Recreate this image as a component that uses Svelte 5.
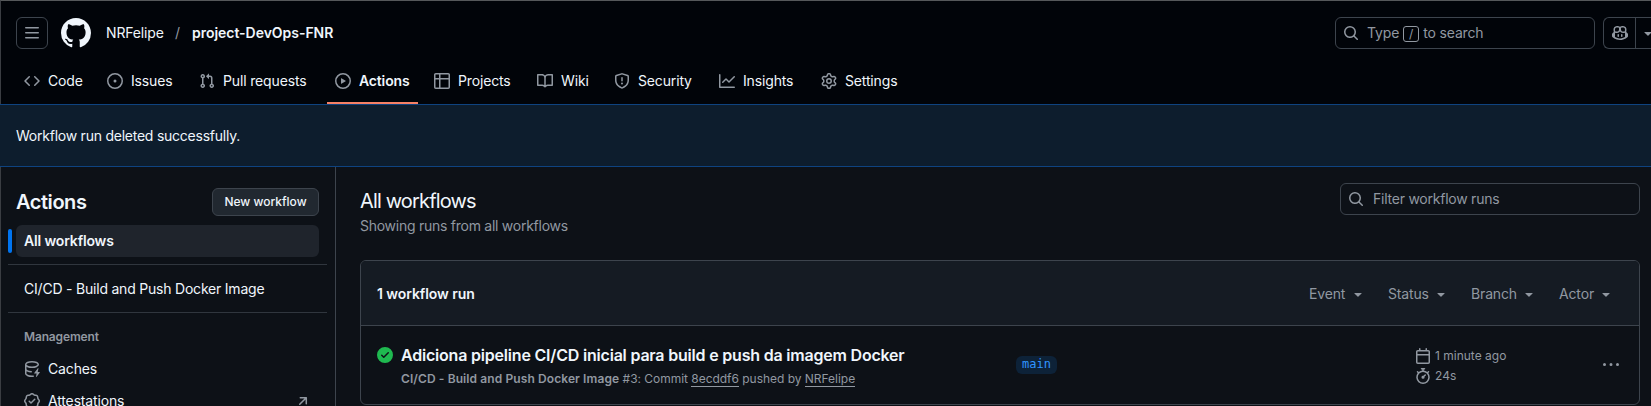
<script>
  const icons = {
    menu: ['M1 2.75A.75.75 0 0 1 1.75 2h12.5a.75.75 0 0 1 0 1.5H1.75A.75.75 0 0 1 1 2.75Zm0 5A.75.75 0 0 1 1.75 7h12.5a.75.75 0 0 1 0 1.5H1.75A.75.75 0 0 1 1 7.75ZM1.75 12h12.5a.75.75 0 0 1 0 1.5H1.75a.75.75 0 0 1 0-1.5Z'],
    mark: ['M8 0c4.42 0 8 3.58 8 8a8.013 8.013 0 0 1-5.45 7.59c-.4.08-.55-.17-.55-.38 0-.27.01-1.13.01-2.2 0-.75-.25-1.23-.54-1.48 1.78-.2 3.65-.88 3.65-3.95 0-.88-.31-1.59-.82-2.15.08-.2.36-1.02-.08-2.12 0 0-.67-.22-2.2.82-.64-.18-1.32-.27-2-.27-.68 0-1.36.09-2 .27-1.53-1.03-2.2-.82-2.2-.82-.44 1.1-.16 1.92-.08 2.12-.51.56-.82 1.28-.82 2.15 0 3.06 1.86 3.75 3.64 3.95-.23.2-.44.55-.51 1.07-.46.21-1.61.55-2.33-.66-.15-.24-.6-.83-1.23-.82-.67.01-.27.38.01.53.34.19.73.9.82 1.13.16.45.68 1.31 2.69.94 0 .67.01 1.3.01 1.49 0 .21-.15.45-.55.38A7.995 7.995 0 0 1 0 8c0-4.42 3.58-8 8-8Z'],
    search: ['M10.68 11.74a6 6 0 0 1-7.922-8.982 6 6 0 0 1 8.982 7.922l3.04 3.04a.749.749 0 0 1-.326 1.275.749.749 0 0 1-.734-.215ZM11.5 7a4.499 4.499 0 1 0-8.997 0A4.499 4.499 0 0 0 11.5 7Z'],
    code: ['m11.28 3.22 4.25 4.25a.75.75 0 0 1 0 1.06l-4.25 4.25a.749.749 0 0 1-1.275-.326.749.749 0 0 1 .215-.734L13.94 8l-3.72-3.72a.749.749 0 0 1 .326-1.275.749.749 0 0 1 .734.215Zm-6.56 0a.751.751 0 0 1 1.042.018.751.751 0 0 1 .018 1.042L2.06 8l3.72 3.72a.749.749 0 0 1-.326 1.275.749.749 0 0 1-.734-.215L.47 8.53a.75.75 0 0 1 0-1.06Z'],
    issue: ['M8 9.5a1.5 1.5 0 1 0 0-3 1.5 1.5 0 0 0 0 3Z', 'M8 0a8 8 0 1 1 0 16A8 8 0 0 1 8 0ZM1.5 8a6.5 6.5 0 1 0 13 0 6.5 6.5 0 0 0-13 0Z'],
    pull: ['M1.5 3.25a2.25 2.25 0 1 1 3 2.122v5.256a2.251 2.251 0 1 1-1.5 0V5.372A2.25 2.25 0 0 1 1.5 3.25Zm5.677-.177L9.573.677A.25.25 0 0 1 10 .854V2.5h1A2.5 2.5 0 0 1 13.5 5v5.628a2.251 2.251 0 1 1-1.5 0V5a1 1 0 0 0-1-1h-1v1.646a.25.25 0 0 1-.427.177L7.177 3.427a.25.25 0 0 1 0-.354ZM3.75 2.5a.75.75 0 1 0 0 1.5.75.75 0 0 0 0-1.5Zm0 9.5a.75.75 0 1 0 0 1.5.75.75 0 0 0 0-1.5Zm8.25.75a.75.75 0 1 0 1.5 0 .75.75 0 0 0-1.5 0Z'],
    play: ['M8 0a8 8 0 1 1 0 16A8 8 0 0 1 8 0ZM1.5 8a6.5 6.5 0 1 0 13 0 6.5 6.5 0 0 0-13 0Zm4.879-2.773 4.264 2.559a.25.25 0 0 1 0 .428l-4.264 2.559A.25.25 0 0 1 6 10.559V5.442a.25.25 0 0 1 .379-.215Z'],
    table: ['M0 1.75C0 .784.784 0 1.75 0h12.5C15.216 0 16 .784 16 1.75v12.5A1.75 1.75 0 0 1 14.25 16H1.75A1.75 1.75 0 0 1 0 14.25ZM6.5 6.5v8h7.75a.25.25 0 0 0 .25-.25V6.5Zm8-1.5V1.75a.25.25 0 0 0-.25-.25H6.5V5Zm-13 1.5v7.75c0 .138.112.25.25.25H5v-8ZM5 5V1.5H1.75a.25.25 0 0 0-.25.25V5Z'],
    book: ['M0 1.75A.75.75 0 0 1 .75 1h4.253c1.227 0 2.317.59 3 1.501A3.743 3.743 0 0 1 11.006 1h4.245a.75.75 0 0 1 .75.75v10.5a.75.75 0 0 1-.75.75h-4.507a2.25 2.25 0 0 0-1.591.659l-.622.621a.75.75 0 0 1-1.06 0l-.622-.621A2.25 2.25 0 0 0 5.258 13H.75a.75.75 0 0 1-.75-.75Zm7.251 10.324.004-5.073-.002-2.253A2.25 2.25 0 0 0 5.003 2.5H1.5v9h3.757a3.75 3.75 0 0 1 1.994.574ZM8.755 4.75l-.004 7.322a3.752 3.752 0 0 1 1.992-.572H14.5v-9h-3.495a2.25 2.25 0 0 0-2.25 2.25Z'],
    shield: ['M7.467.133a1.748 1.748 0 0 1 1.066 0l5.25 1.68A1.75 1.75 0 0 1 15 3.48V7c0 1.566-.32 3.182-1.303 4.682-.983 1.498-2.585 2.813-5.032 3.855a1.697 1.697 0 0 1-1.33 0c-2.447-1.042-4.049-2.357-5.032-3.855C1.32 10.182 1 8.566 1 7V3.48a1.75 1.75 0 0 1 1.217-1.667Zm.61 1.429a.25.25 0 0 0-.153 0l-5.25 1.68a.25.25 0 0 0-.174.238V7c0 1.358.275 2.666 1.057 3.86.784 1.194 2.121 2.34 4.366 3.297a.196.196 0 0 0 .154 0c2.245-.956 3.582-2.104 4.366-3.298C13.225 9.666 13.5 8.36 13.5 7V3.48a.251.251 0 0 0-.174-.237l-5.25-1.68ZM8.75 4.75v3a.75.75 0 0 1-1.5 0v-3a.75.75 0 0 1 1.5 0ZM9 10.5a1 1 0 1 1-2 0 1 1 0 0 1 2 0Z'],
    graph: ['M1.5 1.75V13.5h13.75a.75.75 0 0 1 0 1.5H.75a.75.75 0 0 1-.75-.75V1.75a.75.75 0 0 1 1.5 0Zm14.28 2.53-5.25 5.25a.75.75 0 0 1-1.06 0L7 7.06 4.28 9.78a.751.751 0 0 1-1.042-.018.751.751 0 0 1-.018-1.042l3.25-3.25a.75.75 0 0 1 1.06 0L10 7.94l4.72-4.72a.751.751 0 0 1 1.042.018.751.751 0 0 1 .018 1.042Z'],
    gear: ['M8 0a8.2 8.2 0 0 1 .701.031C9.444.095 9.99.645 10.16 1.29l.288 1.107c.018.066.079.158.212.224.231.114.454.243.668.386.123.082.233.09.299.071l1.103-.303c.644-.176 1.392.021 1.82.63.27.385.506.792.704 1.218.315.675.111 1.422-.364 1.891l-.814.806c-.049.048-.098.147-.088.294.016.257.016.515 0 .772-.01.147.038.246.088.294l.814.806c.475.469.679 1.216.364 1.891a7.977 7.977 0 0 1-.704 1.217c-.428.61-1.176.807-1.82.63l-1.102-.302c-.067-.019-.177-.011-.3.071a5.909 5.909 0 0 1-.668.386c-.133.066-.194.158-.211.224l-.29 1.106c-.168.646-.715 1.196-1.458 1.26a8.006 8.006 0 0 1-1.402 0c-.743-.064-1.289-.614-1.458-1.26l-.289-1.106c-.018-.066-.079-.158-.212-.224a5.738 5.738 0 0 1-.668-.386c-.123-.082-.233-.09-.299-.071l-1.103.303c-.644.176-1.392-.021-1.82-.63a8.12 8.12 0 0 1-.704-1.218c-.315-.675-.111-1.422.363-1.891l.815-.806c.05-.048.098-.147.088-.294a6.214 6.214 0 0 1 0-.772c.01-.147-.038-.246-.088-.294l-.815-.806C.635 6.045.431 5.298.746 4.623a7.92 7.92 0 0 1 .704-1.217c.428-.61 1.176-.807 1.82-.63l1.102.302c.067.019.177.011.3-.071.214-.143.437-.272.668-.386.133-.066.194-.158.211-.224l.29-1.106C6.009.645 6.556.095 7.299.03 7.53.01 7.764 0 8 0Zm-.571 1.525c-.036.003-.108.036-.137.146l-.289 1.105c-.147.561-.549.967-.998 1.189-.173.086-.34.183-.5.29-.417.278-.97.423-1.529.27l-1.103-.303c-.109-.03-.175.016-.195.045-.22.312-.412.644-.573.99-.014.031-.021.11.059.19l.815.806c.411.406.562.957.53 1.456a4.709 4.709 0 0 0 0 .582c.032.499-.119 1.05-.53 1.456l-.815.806c-.081.08-.073.159-.059.19.162.346.353.677.573.989.02.03.085.076.195.046l1.102-.303c.56-.153 1.113-.008 1.53.27.161.107.328.204.501.29.447.222.85.629.997 1.189l.289 1.105c.029.109.101.143.137.146a6.6 6.6 0 0 0 1.142 0c.036-.003.108-.036.137-.146l.289-1.105c.147-.561.549-.967.998-1.189.173-.086.34-.183.5-.29.417-.278.97-.423 1.529-.27l1.103.303c.109.029.175-.016.195-.045.22-.313.411-.644.573-.99.014-.031.021-.11-.059-.19l-.815-.806c-.411-.406-.562-.957-.53-1.456a4.709 4.709 0 0 0 0-.582c-.032-.499.119-1.05.53-1.456l.815-.806c.081-.08.073-.159.059-.19a6.464 6.464 0 0 0-.573-.989c-.02-.03-.085-.076-.195-.046l-1.102.303c-.56.153-1.113.008-1.53-.27a4.44 4.44 0 0 0-.501-.29c-.447-.222-.85-.629-.997-1.189l-.289-1.105c-.029-.11-.101-.143-.137-.146a6.6 6.6 0 0 0-1.142 0ZM11 8a3 3 0 1 1-6 0 3 3 0 0 1 6 0ZM9.5 8a1.5 1.5 0 1 0-3.001.001A1.5 1.5 0 0 0 9.5 8Z'],
    copilot: ['M7.998 15.035c-4.562 0-7.873-2.914-7.998-3.749V9.338c.085-.628.677-1.686 1.588-2.065.013-.07.024-.143.036-.218.029-.183.06-.384.126-.612-.201-.508-.254-1.084-.254-1.656 0-.87.128-1.769.693-2.484.579-.733 1.494-1.124 2.724-1.261 1.206-.134 2.262.034 2.944.765.05.053.096.108.139.165.044-.057.094-.112.143-.165.682-.731 1.738-.899 2.944-.765 1.23.137 2.145.528 2.724 1.261.566.715.693 1.614.693 2.484 0 .572-.053 1.148-.254 1.656.066.228.098.429.126.612.012.076.024.148.037.218.924.385 1.522 1.471 1.591 2.095v1.872c0 .766-3.351 3.795-8.002 3.795Zm0-1.485c2.28 0 4.584-1.11 5.002-1.433V7.862l-.023-.116c-.49.21-1.075.291-1.727.291-1.146 0-2.059-.327-2.71-.991A3.222 3.222 0 0 1 8 6.303a3.24 3.24 0 0 1-.544.743c-.65.664-1.563.991-2.71.991-.652 0-1.236-.081-1.727-.291l-.023.116v4.255c.419.323 2.722 1.433 5.002 1.433ZM6.762 2.83c-.193-.206-.637-.413-1.682-.297-1.019.113-1.479.404-1.713.7-.247.312-.369.789-.369 1.554 0 .793.129 1.171.308 1.371.162.181.519.379 1.442.379.853 0 1.339-.235 1.638-.54.315-.322.527-.827.617-1.553.117-.935-.037-1.395-.241-1.614Zm4.155-.297c-1.044-.116-1.488.091-1.681.297-.204.219-.359.679-.242 1.614.091.726.303 1.231.618 1.553.299.305.784.54 1.638.54.922 0 1.28-.198 1.442-.379.179-.2.308-.578.308-1.371 0-.765-.123-1.242-.37-1.554-.233-.296-.693-.587-1.713-.7Z', 'M6.25 9.037a.75.75 0 0 1 .75.75v1.501a.75.75 0 0 1-1.5 0V9.787a.75.75 0 0 1 .75-.75Zm4.25.75v1.501a.75.75 0 0 1-1.5 0V9.787a.75.75 0 0 1 1.5 0Z'],
    caret: ['m4.427 7.427 3.396 3.396a.25.25 0 0 0 .354 0l3.396-3.396A.25.25 0 0 0 11.396 7H4.604a.25.25 0 0 0-.177.427Z'],
    check: ['M8 16A8 8 0 1 1 8 0a8 8 0 0 1 0 16Zm3.78-9.72a.751.751 0 0 0-.018-1.042.751.751 0 0 0-1.042-.018L6.75 9.19 5.28 7.72a.751.751 0 0 0-1.042.018.751.751 0 0 0-.018 1.042l2 2a.75.75 0 0 0 1.06 0Z'],
    calendar: ['M4.75 0a.75.75 0 0 1 .75.75V2h5V.75a.75.75 0 0 1 1.5 0V2h1.25c.966 0 1.75.784 1.75 1.75v10.5A1.75 1.75 0 0 1 13.25 16H2.75A1.75 1.75 0 0 1 1 14.25V3.75C1 2.784 1.784 2 2.75 2H4V.75A.75.75 0 0 1 4.75 0ZM2.5 7.5v6.75c0 .138.112.25.25.25h10.5a.25.25 0 0 0 .25-.25V7.5Zm10.75-4H2.75a.25.25 0 0 0-.25.25V6h11V3.75a.25.25 0 0 0-.25-.25Z'],
    stopwatch: ['M5.75.75A.75.75 0 0 1 6.5 0h3a.75.75 0 0 1 0 1.5h-.75v1l-.001.041a6.724 6.724 0 0 1 3.464 1.435l.007-.006.75-.75a.749.749 0 0 1 1.275.326.749.749 0 0 1-.215.734l-.75.75-.006.007a6.75 6.75 0 1 1-10.548 0L2.72 5.03l-.75-.75a.751.751 0 0 1 .018-1.042.751.751 0 0 1 1.042-.018l.75.75.007.006A6.72 6.72 0 0 1 7.25 2.541V1.5H6.5a.75.75 0 0 1-.75-.75ZM8 14.5a5.25 5.25 0 1 0-.001-10.501A5.25 5.25 0 0 0 8 14.5Zm.389-6.7 1.33-1.33a.75.75 0 1 1 1.061 1.06L9.45 8.861A1.503 1.503 0 0 1 8 10.75a1.499 1.499 0 1 1 .389-2.95Z'],
    kebab: ['M8 9a1.5 1.5 0 1 0 0-3 1.5 1.5 0 0 0 0 3ZM1.5 9a1.5 1.5 0 1 0 0-3 1.5 1.5 0 0 0 0 3Zm13 0a1.5 1.5 0 1 0 0-3 1.5 1.5 0 0 0 0 3Z'],
    cache: ['M2.5 5.724V8c0 .248.238.7 1.169 1.159.874.43 2.144.745 3.62.822a.75.75 0 1 1-.078 1.498c-1.622-.085-3.102-.432-4.204-.975a5.565 5.565 0 0 1-.507-.28V12.5c0 .133.058.318.282.551.227.237.591.483 1.101.707 1.015.447 2.47.742 4.117.742.406 0 .802-.018 1.183-.052a.751.751 0 1 1 .134 1.494C8.89 15.98 8.45 16 8 16c-1.805 0-3.475-.32-4.721-.869-.623-.274-1.173-.619-1.579-1.041-.408-.425-.7-.964-.7-1.59v-9c0-.626.292-1.165.7-1.591.406-.42.956-.766 1.579-1.04C4.525.32 6.195 0 8 0c1.806 0 3.476.32 4.721.869.623.274 1.173.619 1.579 1.041.408.425.7.964.7 1.59 0 .626-.292 1.165-.7 1.591-.406.42-.956.766-1.578 1.04C11.475 6.68 9.805 7 8 7c-1.805 0-3.475-.32-4.721-.869a6.15 6.15 0 0 1-.779-.407Zm0-2.224c0 .133.058.318.282.551.227.237.591.483 1.101.707C4.898 5.205 6.353 5.5 8 5.5c1.646 0 3.101-.295 4.118-.742.508-.224.873-.471 1.1-.708.224-.232.282-.417.282-.55 0-.133-.058-.318-.282-.551-.227-.237-.591-.483-1.101-.707C11.102 1.795 9.647 1.5 8 1.5c-1.646 0-3.101.295-4.118.742-.508.224-.873.471-1.1.708-.224.232-.282.417-.282.55Z', 'M14.49 7.582a.375.375 0 0 0-.66-.313l-3.625 4.625a.375.375 0 0 0 .295.606h2.127l-.619 2.922a.375.375 0 0 0 .666.304l3.125-4.125A.375.375 0 0 0 15.5 11h-1.778l.769-3.418Z'],
    verified: ['m9.585.52.929.68c.153.112.331.186.518.215l1.138.175a2.678 2.678 0 0 1 2.24 2.24l.174 1.139c.029.187.103.365.215.518l.68.928a2.677 2.677 0 0 1 0 3.17l-.68.928a1.174 1.174 0 0 0-.215.518l-.175 1.138a2.678 2.678 0 0 1-2.241 2.241l-1.138.175a1.17 1.17 0 0 0-.518.215l-.928.68a2.677 2.677 0 0 1-3.17 0l-.928-.68a1.174 1.174 0 0 0-.518-.215L3.83 14.41a2.678 2.678 0 0 1-2.24-2.24l-.175-1.138a1.17 1.17 0 0 0-.215-.518l-.68-.928a2.677 2.677 0 0 1 0-3.17l.68-.928c.112-.153.186-.331.215-.518l.175-1.14a2.678 2.678 0 0 1 2.24-2.24l1.139-.175c.187-.029.365-.103.518-.215l.928-.68a2.677 2.677 0 0 1 3.17 0ZM7.303 1.728l-.927.68a2.67 2.67 0 0 1-1.18.489l-1.137.174a1.179 1.179 0 0 0-.987.987l-.174 1.136a2.677 2.677 0 0 1-.489 1.18l-.68.928a1.18 1.18 0 0 0 0 1.394l.68.927c.256.348.424.753.489 1.18l.174 1.137c.078.509.478.909.987.987l1.136.174a2.67 2.67 0 0 1 1.18.489l.928.68c.414.305.979.305 1.394 0l.927-.68a2.67 2.67 0 0 1 1.18-.489l1.137-.174a1.18 1.18 0 0 0 .987-.987l.174-1.136a2.67 2.67 0 0 1 .489-1.18l.68-.928a1.176 1.176 0 0 0 0-1.394l-.68-.927a2.686 2.686 0 0 1-.489-1.18l-.174-1.137a1.179 1.179 0 0 0-.987-.987l-1.136-.174a2.677 2.677 0 0 1-1.18-.489l-.928-.68a1.176 1.176 0 0 0-1.394 0ZM11.28 6.78l-3.75 3.75a.75.75 0 0 1-1.06 0L4.72 8.78a.751.751 0 0 1 .018-1.042.751.751 0 0 1 1.042-.018L7 8.94l3.22-3.22a.751.751 0 0 1 1.042.018.751.751 0 0 1 .018 1.042Z'],
    arrow: ['M4.53 4.75A.75.75 0 0 1 5.28 4h6.01a.75.75 0 0 1 .75.75v6.01a.75.75 0 0 1-1.5 0v-4.2l-5.26 5.261a.749.749 0 0 1-1.275-.326.749.749 0 0 1 .215-.734L9.48 5.5h-4.2a.75.75 0 0 1-.75-.75Z']
  };

  const tabs = [
    { icon: 'code', label: 'Code', width: 59 },
    { icon: 'issue', label: 'Issues', width: 68 },
    { icon: 'pull', label: 'Pull requests', width: 112 },
    { icon: 'play', label: 'Actions', width: 75, active: true },
    { icon: 'table', label: 'Projects', width: 79 },
    { icon: 'book', label: 'Wiki', width: 53 },
    { icon: 'shield', label: 'Security', width: 81 },
    { icon: 'graph', label: 'Insights', width: 78 },
    { icon: 'gear', label: 'Settings', width: 77 }
  ];

  const filters = [
    { label: 'Event', width: 57 },
    { label: 'Status', width: 61 },
    { label: 'Branch', width: 66 },
    { label: 'Actor', width: 55 }
  ];
</script>

{#snippet icon(name, size = 16)}
  <svg class="icon" width={size} height={size} viewBox="0 0 16 16" aria-hidden="true">
    {#each icons[name] as d}<path {d} />{/each}
  </svg>
{/snippet}

<div class="page">
  <header>
    <div class="topbar">
      <button class="menu">{@render icon('menu')}</button>
      <span class="logo">{@render icon('mark', 30)}</span>
      <span class="owner">NRFelipe</span>
      <span class="slash">/</span>
      <strong class="repo">project-DevOps-FNR</strong>
      <div class="search">{@render icon('search')}<span class="hint">Type <kbd>/</kbd> to search</span></div>
      <div class="copilot">
        <span class="bot">{@render icon('copilot')}</span>
        <span class="drop">{@render icon('caret')}</span>
      </div>
    </div>
    <nav>
      {#each tabs as tab}
        <span class="tab" class:active={tab.active} style:width="{tab.width}px">
          {@render icon(tab.icon)}<span>{tab.label}</span>
        </span>
      {/each}
    </nav>
  </header>

  <div class="flash">Workflow run deleted successfully.</div>

  <div class="body">
    <aside>
      <div class="side-head">
        <h2>Actions</h2>
        <button class="new">New workflow</button>
      </div>
      <div class="item current"><span>All workflows</span></div>
      <div class="rule first"></div>
      <div class="item workflow">CI/CD - Build and Push Docker Image</div>
      <div class="rule second"></div>
      <div class="group">Management</div>
      <div class="item entry">{@render icon('cache')}<span>Caches</span></div>
      <div class="item entry">{@render icon('verified')}<span>Attestations</span><i>{@render icon('arrow')}</i></div>
    </aside>

    <main>
      <div class="main-head">
        <div>
          <h1>All workflows</h1>
          <p>Showing runs from all workflows</p>
        </div>
        <div class="filter">{@render icon('search')}<span>Filter workflow runs</span></div>
      </div>

      <section>
        <div class="list-head">
          <strong>1 workflow run</strong>
          <div class="menus">
            {#each filters as f}
              <span style:width="{f.width}px">{f.label}{@render icon('caret')}</span>
            {/each}
          </div>
        </div>
        <div class="run">
          <span class="ok">{@render icon('check')}</span>
          <div class="info">
            <div class="title">Adiciona pipeline CI/CD inicial para build e push da imagem Docker</div>
            <div class="sub"><b>CI/CD - Build and Push Docker Image</b> #3: Commit <u>8ecddf6</u> pushed by <u>NRFelipe</u></div>
          </div>
          <div class="branch"><code>main</code></div>
          <div class="meta">
            <div>{@render icon('calendar')}<span>1 minute ago</span></div>
            <div>{@render icon('stopwatch')}<span>24s</span></div>
          </div>
          <span class="kebab">{@render icon('kebab')}</span>
        </div>
      </section>
    </main>
  </div>
</div>

<style>
  :global(body) { background: #0d1117; overflow: hidden; }
  .page {
    box-sizing: border-box;
    width: 1651px;
    height: 406px;
    overflow: hidden;
    background: #0d1117;
    color: #f0f6fc;
    font: 14px/20px Inter, "Liberation Sans", sans-serif;
    letter-spacing: -0.15px;
    white-space: nowrap;
    box-shadow: inset 1px 0 #3a3d42;
    display: flex;
    flex-direction: column;
  }
  .page :global(*) { box-sizing: border-box; }
  .icon { display: block; flex: none; fill: currentColor; }
  button { font: inherit; letter-spacing: inherit; color: inherit; padding: 0; }
  h1, h2, p { margin: 0; }
  strong, b { font-weight: 600; }

  header {
    height: 104px;
    flex: none;
    background: #010409;
    border-top: 1px solid #55585a;
    border-left: 1px solid #3a3d42;
  }
  .topbar { display: flex; align-items: center; height: 64px; padding-left: 15px; }
  .menu {
    width: 32px; height: 32px;
    display: grid; place-items: center;
    background: none; border: 1px solid #3d444d; border-radius: 6px; color: #9198a1;
  }
  .logo { margin-left: 13px; width: 30px; }
  .owner { margin-left: 15px; width: 69px; }
  .slash { width: 17px; color: #9198a1; }
  .repo { letter-spacing: -0.03px; }
  .search {
    margin-left: auto;
    width: 260px; height: 32px;
    display: flex; align-items: center; gap: 8px;
    padding-left: 7px;
    border: 1px solid #3d444d; border-radius: 6px; color: #9198a1;
  }
  .hint { display: flex; align-items: center; gap: 4px; }
  kbd {
    display: block; width: 16px; height: 16px; margin-top: 1px;
    border: 1px solid #9198a1; border-radius: 3px;
    font: 12px/14px Inter, sans-serif; text-align: center;
  }
  .copilot {
    margin-left: 8px; width: 48px; height: 32px;
    display: flex; overflow: hidden;
    border: 1px solid #3d444d; border-right: 0;
    border-radius: 6px 0 0 6px; color: #9198a1;
  }
  .bot { width: 32px; padding: 7px 0 0 8px; border-right: 1px solid #3d444d; flex: none; }
  .drop { padding: 7px 0 0 3px; margin-left: 0; }
  .drop .icon { margin-left: 1px; }
  nav { display: flex; gap: 8px; height: 39px; padding-left: 15px; }
  .tab {
    position: relative;
    box-sizing: content-box;
    display: flex; gap: 8px; align-items: center;
    height: 32px; padding: 0 8px; flex: none;
  }
  .tab .icon { color: #9198a1; }
  .active { font-weight: 600; }
  .active::after {
    content: ""; position: absolute; left: 0; right: 0; top: 37px; height: 2px;
    background: #f78166;
  }

  .flash {
    flex: none; height: 63px; padding: 21px 16px;
    background: #0d1d2d;
    border-top: 1px solid #0e4380; border-bottom: 1px solid #0e4380;
    letter-spacing: -0.24px;
  }

  .body { display: flex; flex: 1; min-height: 0; }
  aside { width: 336px; border-right: 1px solid #3d444d; padding: 21px 8px 0; flex: none; }
  .side-head { display: flex; align-items: center; justify-content: space-between; height: 28px; padding: 0 8px; }
  h2 { font-size: 20px; font-weight: 600; letter-spacing: -0.45px; }
  .new {
    width: 107px; height: 28px;
    background: #212830; border: 1px solid #3d444d; border-radius: 6px;
    font-size: 12px; font-weight: 500; letter-spacing: 0;
  }
  .item { display: flex; align-items: center; height: 32px; margin: 0 8px; padding: 0 8px; }
  .current { position: relative; margin-top: 9px; background: #1f242c; border-radius: 6px; font-weight: 600; }
  .current::before {
    content: ""; position: absolute; left: -8px; top: 4px; width: 4px; height: 24px;
    border-radius: 3px; background: #0074f0;
  }
  .rule { height: 1px; background: #30363e; }
  .first { margin: 7px 0 8px; }
  .second { margin: 7px 0 15px; }
  .workflow { letter-spacing: -0.21px; }
  .group { padding: 0 16px; font-size: 12px; font-weight: 600; line-height: 18px; color: #9198a1; margin-bottom: 7px; }
  .entry { gap: 8px; }
  .entry .icon { color: #9198a1; }
  .entry i { margin-left: auto; }

  main { flex: 1; padding: 16px 11px 0 24px; }
  .main-head { display: flex; justify-content: space-between; height: 77px; }
  h1 { font-size: 20px; font-weight: 400; line-height: 30px; padding-top: 3px; letter-spacing: -0.85px; }
  p { color: #9198a1; letter-spacing: -0.26px; }
  .filter {
    width: 300px; height: 32px;
    display: flex; align-items: center; gap: 9px; padding-left: 7px;
    border: 1px solid #3d444d; border-radius: 6px; color: #9198a1;
    letter-spacing: -0.24px;
  }
  section { height: 145px; border: 1px solid #3d444d; border-radius: 6px; overflow: hidden; }
  .list-head {
    height: 65px; padding: 1px 25px 0 16px;
    display: flex; align-items: center; justify-content: space-between;
    background: #151b23; border-bottom: 1px solid #3d444d;
  }
  .list-head strong { letter-spacing: -0.07px; padding-top: 1px; }
  .menus { display: flex; gap: 22px; color: #9198a1; }
  .menus span { display: flex; align-items: center; justify-content: space-between; }
  .run { display: flex; height: 78px; padding: 16px 19px 0 16px; }
  .ok { color: #1fb950; padding-top: 5px; }
  .info { width: 615px; margin-left: 8px; }
  .title { font-size: 16px; font-weight: 600; line-height: 26px; letter-spacing: -0.2px; }
  .sub { font-size: 12px; line-height: 22px; color: #9198a1; letter-spacing: -0.03px; }
  .sub b { letter-spacing: 0.1px; }
  u { text-decoration: none; border-bottom: 1px solid #9198a1; }
  .branch { width: 399px; padding-top: 14px; }
  code {
    display: block; width: 41px; height: 18px; border-radius: 6px;
    background: #0d2238; color: #3094ff;
    font: 12px/17px "DejaVu Sans Mono", monospace; text-align: center; letter-spacing: 0;
  }
  .meta { width: 188px; padding-top: 4px; font-size: 12px; color: #9198a1; letter-spacing: 0; }
  .meta div { display: flex; gap: 4px; height: 20px; align-items: center; }
  .kebab { padding-top: 15px; color: #9198a1; }
</style>
